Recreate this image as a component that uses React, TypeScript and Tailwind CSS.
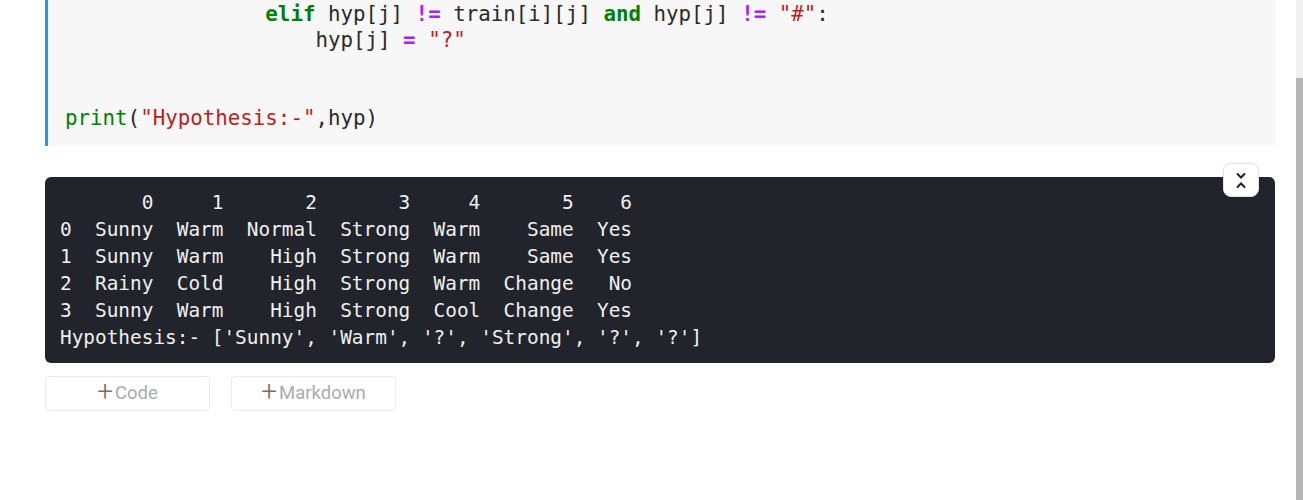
import React from 'react'

const MONO = "font-['DejaVu_Sans_Mono',monospace]"

const OUTPUT_LINES = [
  '       0     1       2       3     4       5    6',
  '0  Sunny  Warm  Normal  Strong  Warm    Same  Yes',
  '1  Sunny  Warm    High  Strong  Warm    Same  Yes',
  '2  Rainy  Cold    High  Strong  Warm  Change   No',
  '3  Sunny  Warm    High  Strong  Cool  Change  Yes',
  "Hypothesis:- ['Sunny', 'Warm', '?', 'Strong', '?', '?']",
]

function Kw({ children }: { children: React.ReactNode }) {
  return <span className="font-bold text-[#008000]">{children}</span>
}

function Op({ children }: { children: React.ReactNode }) {
  return <span className="font-bold text-[#aa22ff]">{children}</span>
}

function Str({ children }: { children: React.ReactNode }) {
  return <span className="text-[#ba2121]">{children}</span>
}

function CodeCell() {
  return (
    <div className="border-l-[3px] border-[#1ea0dc] bg-[#f7f7f7] pl-[17px] pt-[1px] pb-[15px]">
      <pre className={`${MONO} text-[20.8px] leading-[26px] text-[#2a2a2a] whitespace-pre`}>
        {'                '}
        <Kw>elif</Kw> hyp[j] <Op>!=</Op> train[i][j] <Kw>and</Kw> hyp[j] <Op>!=</Op> <Str>"#"</Str>:
        {'\n                    '}hyp[j] <Op>=</Op> <Str>"?"</Str>
        {'\n\n\n'}
        <span className="text-[#008000]">print</span>(<Str>"Hypothesis:-"</Str>,hyp)
      </pre>
    </div>
  )
}

function OutputCell() {
  return (
    <div className="relative mt-[31px] rounded-md bg-[#21242b] px-[15px] py-[12px]">
      <pre className={`${MONO} text-[19.4px] leading-[27px] text-[#f0f0f0] whitespace-pre`}>
        {OUTPUT_LINES.join('\n')}
      </pre>
      <button className="absolute -top-[14px] right-[16px] flex h-[34px] w-[36px] flex-col items-center justify-center gap-[1px] rounded-lg border border-[#e4e4e4] bg-white shadow-sm">
        <svg width="12" height="8" viewBox="0 0 12 8" fill="none" stroke="#222" strokeWidth="2" strokeLinecap="round">
          <path d="M2.5 2 L6 5.5 L9.5 2" />
        </svg>
        <svg width="12" height="8" viewBox="0 0 12 8" fill="none" stroke="#222" strokeWidth="2" strokeLinecap="round">
          <path d="M2.5 6 L6 2.5 L9.5 6" />
        </svg>
      </button>
    </div>
  )
}

function AddButton({ label }: { label: string }) {
  return (
    <button className="flex h-[35px] w-[165px] items-center justify-center rounded border border-[#ebebeb] bg-white font-['Roboto',sans-serif]">
      <span className="mr-[2px] -mt-[4px] text-[28px] leading-none font-light text-[#6f6f6f]">+</span>
      <span className="text-[18.5px] text-[#ababab]">{label}</span>
    </button>
  )
}

export default function App() {
  return (
    <div className="flex h-[500px] w-full overflow-hidden bg-white">
      <main className="flex-1 pl-[45px] pr-[21px]">
        <CodeCell />
        <OutputCell />
        <div className="mt-[13px] flex gap-[21px]">
          <AddButton label="Code" />
          <AddButton label="Markdown" />
        </div>
      </main>
      <div className="flex w-[7px] flex-col bg-[#f0f0f0]">
        <div className="h-[78px]" />
        <div className="flex-1 bg-[#b6b6b6]" />
      </div>
    </div>
  )
}
